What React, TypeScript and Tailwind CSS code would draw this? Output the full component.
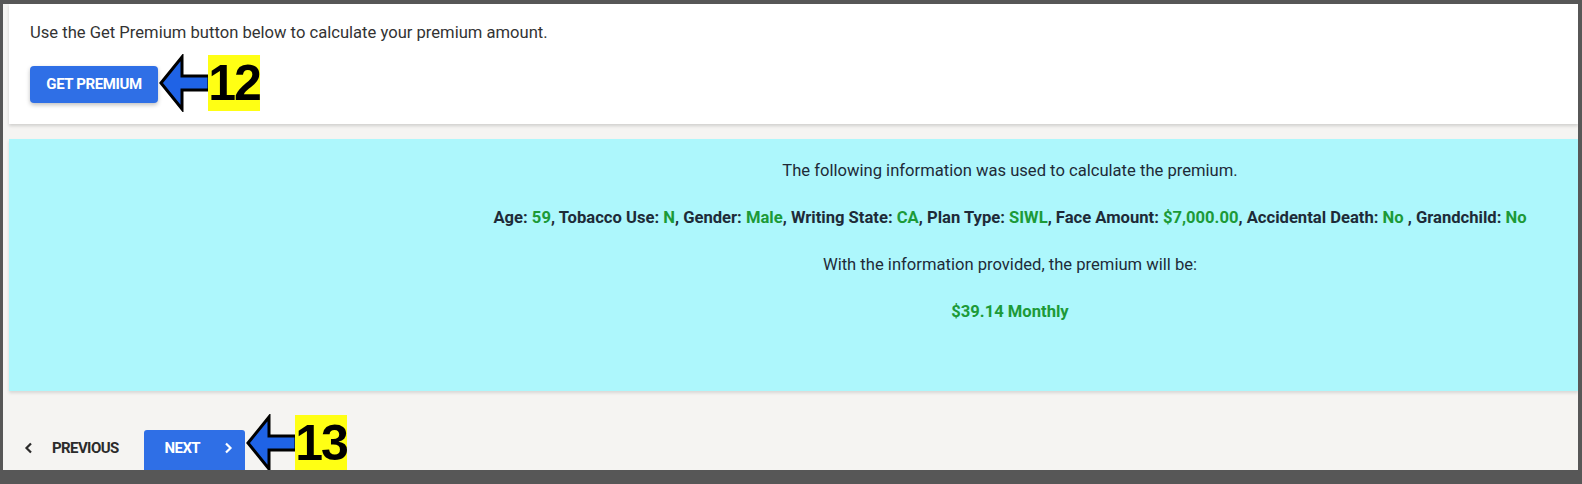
import React from 'react';

const Callout: React.FC<{ n: string; className: string }> = ({ n, className }) => (
  <div className={`absolute flex items-center ${className}`}>
    <svg width="52" height="58" viewBox="0 0 52 58" className="-mr-[2px]">
      <polygon
        points="3,29 24,3 24,22 51,22 51,36 24,36 24,55"
        fill="#1f63e6"
        stroke="#000"
        strokeWidth="3"
        strokeLinejoin="miter"
      />
    </svg>
    <div className="bg-[#ffff14] h-[56px] w-[52px] flex items-center justify-center font-['Liberation_Sans',Arial,sans-serif] font-bold text-[50px] leading-none text-black tracking-[-2px]">
      {n}
    </div>
  </div>
);

const Label: React.FC<{ k: string; v: string; sep?: string }> = ({ k, v, sep = ',' }) => (
  <>
    <span>{k}: </span>
    <span className="text-[#1c9a38]">{v}</span>
    {sep}
  </>
);

export default function App() {
  return (
    <div className="w-[1582px] h-[484px] bg-[#575757] pt-[4px] pl-[3px] pr-[4px] pb-[14px] font-['Roboto',sans-serif]">
      <div className="relative h-full bg-[#f5f4f2] pl-[6px] overflow-hidden flex flex-col">
        {/* Get premium card */}
        <div className="bg-white h-[120px] shrink-0 px-[21px] pt-[17px] shadow-[0_2px_3px_rgba(0,0,0,0.15)]">
          <p className="text-[16.6px] leading-[24px] text-[#333]">
            Use the Get Premium button below to calculate your premium amount.
          </p>
          <button className="mt-[21px] h-[37px] w-[128px] rounded-[4px] bg-[#2f6fe6] text-white text-[15px] font-bold tracking-[-0.4px] shadow-[0_2px_4px_rgba(0,0,0,0.25)]">
            GET PREMIUM
          </button>
        </div>

        {/* Result panel */}
        <div className="mt-[15px] h-[252px] shrink-0 bg-[#adf7fc] shadow-[0_2px_3px_rgba(0,0,0,0.12)] pl-[433px] pt-[20px] text-center text-[16.6px] leading-[24px] text-[#1e2b38]">
          <p>The following information was used to calculate the premium.</p>
          <p className="mt-[23px] font-bold">
            <Label k="Age" v="59" /> <Label k="Tobacco Use" v="N" /> <Label k="Gender" v="Male" />{' '}
            <Label k="Writing State" v="CA" /> <Label k="Plan Type" v="SIWL" />{' '}
            <Label k="Face Amount" v="$7,000.00" /> <Label k="Accidental Death" v="No " sep="" />,{' '}
            <Label k="Grandchild" v="No" sep="" />
          </p>
          <p className="mt-[23px]">With the information provided, the premium will be:</p>
          <p className="mt-[23px] font-bold text-[#1c9a38]">$39.14 Monthly</p>
        </div>

        {/* Footer nav */}
        <div className="flex items-start pt-[39px] pl-[15px] gap-[25px]">
          <button className="h-[36px] flex items-center gap-[18px] text-[#2b2b2b] text-[15px] font-bold tracking-[-0.6px]">
            <svg width="10" height="12" viewBox="0 0 10 12" fill="none">
              <path d="M7 1.5 2.5 6 7 10.5" stroke="#2b2b2b" strokeWidth="2.2" />
            </svg>
            PREVIOUS
          </button>
          <button className="h-[44px] w-[101px] rounded-t-[3px] bg-[#2f6fe6] text-white text-[15px] font-bold tracking-[-0.6px] flex items-start pt-[7px] pl-[21px] gap-[23px]">
            NEXT
            <svg width="10" height="12" viewBox="0 0 10 12" fill="none" className="mt-[5px]">
              <path d="M3 1.5 7.5 6 3 10.5" stroke="#fff" strokeWidth="2.2" />
            </svg>
          </button>
        </div>

        <Callout n="12" className="left-[155px] top-[50px]" />
        <Callout n="13" className="left-[242px] top-[410px]" />
      </div>
    </div>
  );
}
